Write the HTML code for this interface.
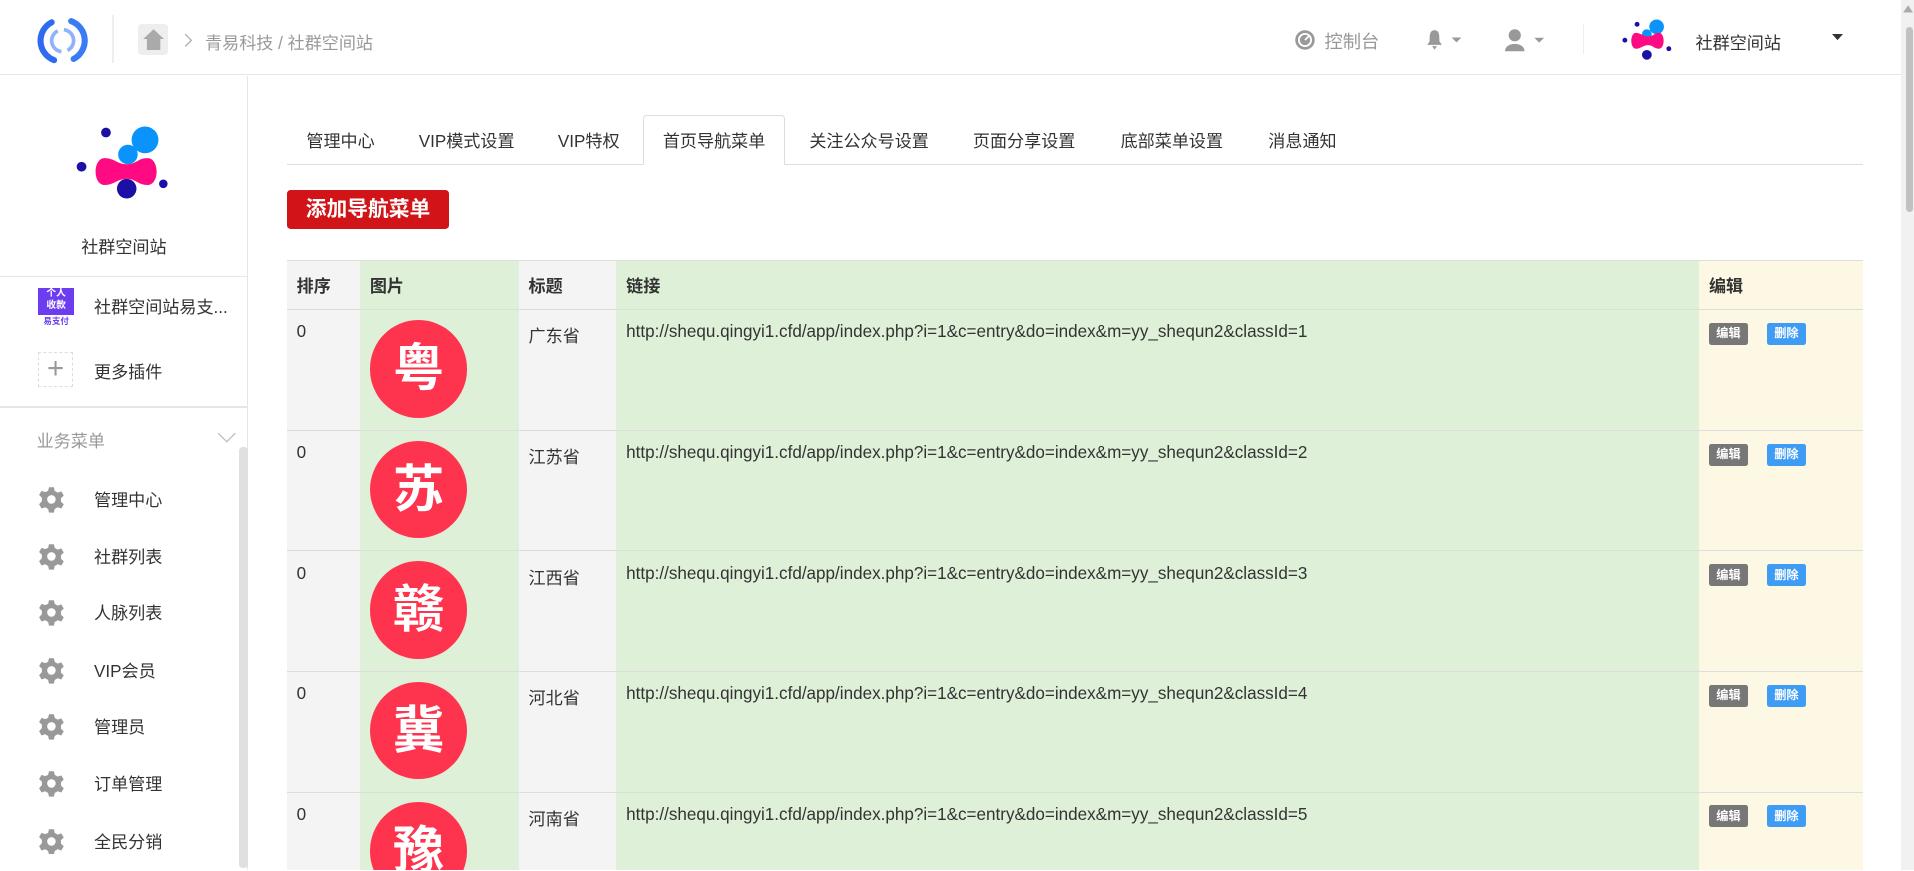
<!DOCTYPE html>
<html><head><meta charset="utf-8"><style>
html,body{margin:0;padding:0;overflow:hidden}
#w{zoom:1.2207;width:1568px;height:713px;overflow:hidden;position:relative;background:#fff;font-family:"Liberation Sans","Noto Sans CJK SC",sans-serif;color:#333;font-size:14px}
.a{position:absolute}
.hdr{left:0;top:0;width:1557px;height:61px;border-bottom:1px solid #e6e6e6}
.side{left:0;top:62px;width:203px;height:652px;border-right:1px solid #e6e6e6;box-sizing:border-box}
.mi{position:absolute;left:0;width:195px;height:30px}
.mi svg{position:absolute;left:31px;top:5px}
.mi span{position:absolute;left:77px;top:5px;font-size:14px;color:#333}
.tab{position:absolute;top:104px;font-size:14px;color:#333}
table{border-collapse:collapse;position:absolute;left:235px;top:213px;width:1291px;table-layout:fixed}
td,th{border-top:1px solid #ddd;text-align:left;vertical-align:top;padding:10px 8px;font-size:14px;color:#333}
th{font-weight:bold;height:17px;padding-top:9px}
td{height:77px}
.g{background:#f4f4f4}.gr{background:#dff0d8}.y{background:#fcf8e3}
.c{width:80px;height:80px;border-radius:50%;background:#fe344f;color:#fff;font-weight:bold;font-size:42px;line-height:80px;text-align:center;margin-top:-2px}
.b{display:inline-block;font-size:10px;font-weight:bold;color:#fff;padding:2px 6px;border-radius:2px;line-height:14px}
</style></head><body><div id="w">
<div class="a hdr">
 <svg class="a" style="left:30px;top:12px" width="42" height="42" viewBox="0 0 42 42"><path d="M12 6 A17 17 0 0 0 14 37" stroke="#2f6bf2" stroke-width="5" fill="none" stroke-linecap="round"/><path d="M30 36 A17 17 0 0 0 28 5" stroke="#3b7cf5" stroke-width="5" fill="none" stroke-linecap="round"/><path d="M17 13 A9 9 0 0 0 20 30" stroke="#8fb2f8" stroke-width="3" fill="none"/><path d="M25 29 A9 9 0 0 0 22 12" stroke="#8fb2f8" stroke-width="3" fill="none"/></svg>
 <div class="a" style="left:92px;top:12px;width:1px;height:40px;background:#eee"></div>
 <div class="a" style="left:113px;top:20px;width:25px;height:25px;background:#eee;border-radius:3px"></div>
 <svg class="a" style="left:116px;top:23px" width="19" height="19" viewBox="0 0 19 19"><path d="M9.5 1 L18 9 H15 V18 H4 V9 H1 Z" fill="#aaa"/></svg>
 <svg class="a" style="left:151px;top:27px" width="8" height="12"><path d="M1 1 L6 6 L1 11" stroke="#aaa" fill="none"/></svg>
 <div class="a" style="left:168px;top:24px;color:#999;font-size:14px">青易科技 / 社群空间站</div>
 <svg class="a" style="left:1060px;top:24px" width="18" height="18"><circle cx="9" cy="9" r="8" fill="#999"/><circle cx="9" cy="9" r="5" fill="none" stroke="#fff" stroke-width="1.5"/><path d="M9 9 L13 5" stroke="#fff" stroke-width="1.5"/></svg>
 <div class="a" style="left:1085px;top:23px;color:#999;font-size:15px">控制台</div>
 <svg class="a" style="left:1168px;top:24px" width="36" height="18"><path d="M7 1 C3 1 3 5 3 10 L1 13 H13 L11 10 C11 5 11 1 7 1Z M5 14 H9 L7 17Z" fill="#999"/><path d="M21 7 H29 L25 11Z" fill="#999"/></svg>
 <svg class="a" style="left:1233px;top:23px" width="36" height="20"><circle cx="8" cy="6" r="5" fill="#999"/><path d="M0 19 C0 11 16 11 16 19Z" fill="#999"/><path d="M24 8 H32 L28 12Z" fill="#999"/></svg>
 <div class="a" style="left:1297px;top:20px;width:1px;height:24px;background:#eee"></div>
 <svg class="a" style="left:1327px;top:14px" width="44" height="36" viewBox="0 0 44 36"><circle cx="30" cy="8" r="6" fill="#0a94fb"/><circle cx="22" cy="14" r="4" fill="#0a94fb"/><circle cx="14" cy="6" r="2" fill="#1b0fa5"/><circle cx="4" cy="19" r="2" fill="#1b0fa5"/><circle cx="40" cy="26" r="2" fill="#1b0fa5"/><circle cx="22" cy="31" r="4" fill="#1b0fa5"/><path d="M13 13 C17 13 19 16 23 16 C27 16 28 13 32 13 C37 13 37 26 32 26 C28 26 27 23 23 23 C19 23 17 26 13 26 C8 26 8 13 13 13Z" fill="#ff0a82"/></svg>
 <div class="a" style="left:1389px;top:24px;font-size:14px">社群空间站</div>
 <svg class="a" style="left:1501px;top:28px" width="10" height="8"><path d="M0 0 H9 L4.5 5Z" fill="#333"/></svg>
</div>
<div class="a" style="left:1557px;top:0;width:11px;height:714px;background:#f1f1f1"></div>
<div class="a" style="left:1561px;top:22px;width:6px;height:152px;background:#c1c1c1;border-radius:3px"></div>
<svg class="a" style="left:1558px;top:3px" width="10" height="8"><path d="M5 1 L9 7 H1Z" fill="#aaa"/></svg>

<div class="a side">
 <svg class="a" style="left:60px;top:40px" width="82" height="64" viewBox="0 0 82 64"><circle cx="59" cy="13" r="11" fill="#0a94fb"/><circle cx="45" cy="25" r="8" fill="#0a94fb"/><circle cx="27" cy="7" r="4" fill="#1b0fa5"/><circle cx="7" cy="35" r="4" fill="#1b0fa5"/><circle cx="74" cy="49" r="3.5" fill="#1b0fa5"/><circle cx="44" cy="53" r="8" fill="#1b0fa5"/><path d="M26 28 C34 28 36 33 44 33 C52 33 53 28 61 28 C71 28 71 50 61 50 C53 50 52 45 44 45 C36 45 34 50 26 50 C16 50 16 28 26 28Z" fill="#ff0a82"/></svg>
 <div class="a" style="left:0;width:203px;top:129px;text-align:center;font-size:14px">社群空间站</div>
 <div class="a" style="left:0;top:164px;width:203px;height:1px;background:#e6e6e6"></div>
 <div class="a" style="left:31px;top:174px;width:30px;height:22px;background:#6b3cf0;color:#fff;font-size:8px;font-weight:bold;line-height:10px;text-align:center">个人<br>收款</div>
 <div class="a" style="left:31px;top:196px;width:30px;font-size:7px;color:#6b3cf0;text-align:center;font-weight:bold">易支付</div>
 <div class="a" style="left:77px;top:178px">社群空间站易支...</div>
 <div class="a" style="left:31px;top:226px;width:29px;height:29px;border:1px dashed #ddd;box-sizing:border-box;color:#999;font-size:24px;line-height:26px;text-align:center">+</div>
 <div class="a" style="left:77px;top:231px">更多插件</div>
 <div class="a" style="left:0;top:271px;width:203px;height:1px;background:#e6e6e6"></div>
 <div class="a" style="left:30px;top:288px;color:#999">业务菜单</div>
 <svg class="a" style="left:178px;top:292px" width="16" height="10"><path d="M1 1 L8 8 L15 1" stroke="#bbb" fill="none"/></svg>
 <div class="a" style="left:196px;top:304px;width:7px;height:345px;background:#e0e0e0;border-radius:3px"></div>
</div>
<div class="a" style="left:0;top:62px">
 <div class="mi" style="top:331px"><svg width="22" height="22" viewBox="0 0 22 22"><path d="M9 1h4l.7 3 2.4 1.4 3-1 2 3.4-2.3 2.2v2.8l2.3 2.2-2 3.4-3-1-2.4 1.4-.7 3H9l-.7-3-2.4-1.4-3 1-2-3.4L3.2 12.4V9.6L.9 7.4l2-3.4 3 1L8.3 4z" fill="#999"/><circle cx="11" cy="11" r="3.5" fill="#fff"/></svg><span>管理中心</span></div>
 <div class="mi" style="top:378px"><svg width="22" height="22" viewBox="0 0 22 22"><path d="M9 1h4l.7 3 2.4 1.4 3-1 2 3.4-2.3 2.2v2.8l2.3 2.2-2 3.4-3-1-2.4 1.4-.7 3H9l-.7-3-2.4-1.4-3 1-2-3.4L3.2 12.4V9.6L.9 7.4l2-3.4 3 1L8.3 4z" fill="#999"/><circle cx="11" cy="11" r="3.5" fill="#fff"/></svg><span>社群列表</span></div>
 <div class="mi" style="top:424px"><svg width="22" height="22" viewBox="0 0 22 22"><path d="M9 1h4l.7 3 2.4 1.4 3-1 2 3.4-2.3 2.2v2.8l2.3 2.2-2 3.4-3-1-2.4 1.4-.7 3H9l-.7-3-2.4-1.4-3 1-2-3.4L3.2 12.4V9.6L.9 7.4l2-3.4 3 1L8.3 4z" fill="#999"/><circle cx="11" cy="11" r="3.5" fill="#fff"/></svg><span>人脉列表</span></div>
 <div class="mi" style="top:471px"><svg width="22" height="22" viewBox="0 0 22 22"><path d="M9 1h4l.7 3 2.4 1.4 3-1 2 3.4-2.3 2.2v2.8l2.3 2.2-2 3.4-3-1-2.4 1.4-.7 3H9l-.7-3-2.4-1.4-3 1-2-3.4L3.2 12.4V9.6L.9 7.4l2-3.4 3 1L8.3 4z" fill="#999"/><circle cx="11" cy="11" r="3.5" fill="#fff"/></svg><span>VIP会员</span></div>
 <div class="mi" style="top:517px"><svg width="22" height="22" viewBox="0 0 22 22"><path d="M9 1h4l.7 3 2.4 1.4 3-1 2 3.4-2.3 2.2v2.8l2.3 2.2-2 3.4-3-1-2.4 1.4-.7 3H9l-.7-3-2.4-1.4-3 1-2-3.4L3.2 12.4V9.6L.9 7.4l2-3.4 3 1L8.3 4z" fill="#999"/><circle cx="11" cy="11" r="3.5" fill="#fff"/></svg><span>管理员</span></div>
 <div class="mi" style="top:564px"><svg width="22" height="22" viewBox="0 0 22 22"><path d="M9 1h4l.7 3 2.4 1.4 3-1 2 3.4-2.3 2.2v2.8l2.3 2.2-2 3.4-3-1-2.4 1.4-.7 3H9l-.7-3-2.4-1.4-3 1-2-3.4L3.2 12.4V9.6L.9 7.4l2-3.4 3 1L8.3 4z" fill="#999"/><circle cx="11" cy="11" r="3.5" fill="#fff"/></svg><span>订单管理</span></div>
 <div class="mi" style="top:611px"><svg width="22" height="22" viewBox="0 0 22 22"><path d="M9 1h4l.7 3 2.4 1.4 3-1 2 3.4-2.3 2.2v2.8l2.3 2.2-2 3.4-3-1-2.4 1.4-.7 3H9l-.7-3-2.4-1.4-3 1-2-3.4L3.2 12.4V9.6L.9 7.4l2-3.4 3 1L8.3 4z" fill="#999"/><circle cx="11" cy="11" r="3.5" fill="#fff"/></svg><span>全民分销</span></div>
</div>

<div class="a" style="left:235px;top:134px;width:1291px;height:1px;background:#ddd"></div>
<div class="a" style="left:527px;top:94px;width:116px;height:41px;border:1px solid #ddd;border-bottom:1px solid #fff;border-radius:3px 3px 0 0;background:#fff;box-sizing:border-box"></div>
<div class="tab" style="left:251px">管理中心</div>
<div class="tab" style="left:343px">VIP模式设置</div>
<div class="tab" style="left:457px">VIP特权</div>
<div class="tab" style="left:543px">首页导航菜单</div>
<div class="tab" style="left:663px">关注公众号设置</div>
<div class="tab" style="left:797px">页面分享设置</div>
<div class="tab" style="left:918px">底部菜单设置</div>
<div class="tab" style="left:1039px">消息通知</div>

<div class="a" style="left:235px;top:156px;width:133px;height:32px;background:#d01418;border-radius:3px;color:#fff;font-weight:bold;font-size:17px;line-height:32px;text-align:center">添加导航菜单</div>

<table>
<colgroup><col style="width:60px"><col style="width:130px"><col style="width:80px"><col style="width:887px"><col style="width:134px"></colgroup>
<tr><th class="g">排序</th><th class="gr">图片</th><th class="g">标题</th><th class="gr">链接</th><th class="y">编辑</th></tr>
<tr><td class="g">0</td><td class="gr"><div class="c">粤</div></td><td class="g">广东省</td><td class="gr">http://shequ.qingyi1.cfd/app/index.php?i=1&amp;c=entry&amp;do=index&amp;m=yy_shequn2&amp;classId=1</td><td class="y"><span class="b" style="background:#777">编辑</span>&nbsp;&nbsp;&nbsp;&nbsp;<span class="b" style="background:#3e9cf5">删除</span></td></tr>
<tr><td class="g">0</td><td class="gr"><div class="c">苏</div></td><td class="g">江苏省</td><td class="gr">http://shequ.qingyi1.cfd/app/index.php?i=1&amp;c=entry&amp;do=index&amp;m=yy_shequn2&amp;classId=2</td><td class="y"><span class="b" style="background:#777">编辑</span>&nbsp;&nbsp;&nbsp;&nbsp;<span class="b" style="background:#3e9cf5">删除</span></td></tr>
<tr><td class="g">0</td><td class="gr"><div class="c">赣</div></td><td class="g">江西省</td><td class="gr">http://shequ.qingyi1.cfd/app/index.php?i=1&amp;c=entry&amp;do=index&amp;m=yy_shequn2&amp;classId=3</td><td class="y"><span class="b" style="background:#777">编辑</span>&nbsp;&nbsp;&nbsp;&nbsp;<span class="b" style="background:#3e9cf5">删除</span></td></tr>
<tr><td class="g">0</td><td class="gr"><div class="c">冀</div></td><td class="g">河北省</td><td class="gr">http://shequ.qingyi1.cfd/app/index.php?i=1&amp;c=entry&amp;do=index&amp;m=yy_shequn2&amp;classId=4</td><td class="y"><span class="b" style="background:#777">编辑</span>&nbsp;&nbsp;&nbsp;&nbsp;<span class="b" style="background:#3e9cf5">删除</span></td></tr>
<tr><td class="g">0</td><td class="gr"><div class="c">豫</div></td><td class="g">河南省</td><td class="gr">http://shequ.qingyi1.cfd/app/index.php?i=1&amp;c=entry&amp;do=index&amp;m=yy_shequn2&amp;classId=5</td><td class="y"><span class="b" style="background:#777">编辑</span>&nbsp;&nbsp;&nbsp;&nbsp;<span class="b" style="background:#3e9cf5">删除</span></td></tr>
</table>
</div></body></html>
